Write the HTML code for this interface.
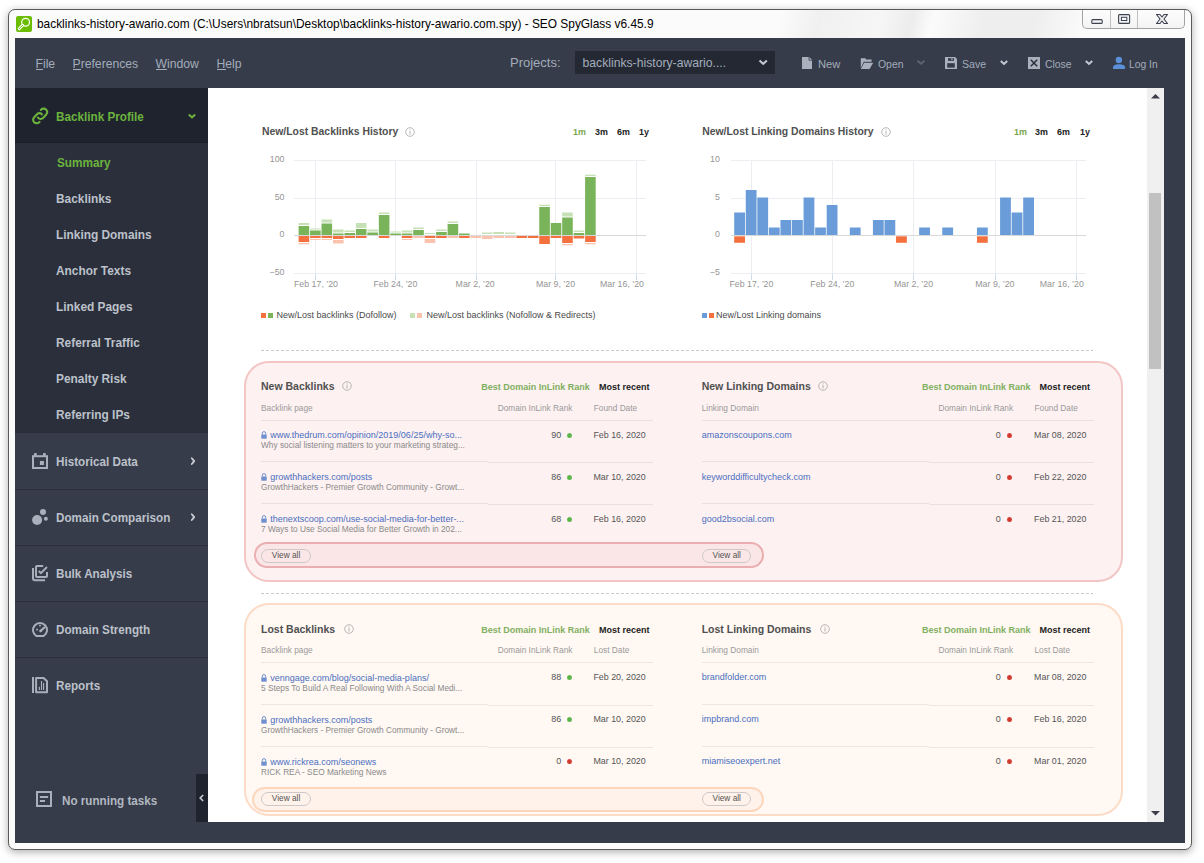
<!DOCTYPE html>
<html><head><meta charset="utf-8"><style>
html,body{margin:0;padding:0;width:1204px;height:863px;overflow:hidden;background:#fff;font-family:"Liberation Sans", sans-serif;}
.t{position:absolute;white-space:nowrap;line-height:1;font-family:"Liberation Sans", sans-serif;}
</style></head><body>
<div style="position:absolute;left:8px;top:9px;width:1184px;height:841px;border:1px solid #5a5a5a;border-radius:7px;background:#fbfbfb;box-shadow:0 2px 9px rgba(0,0,0,0.33);box-sizing:border-box"></div>
<div style="position:absolute;left:780px;top:10px;width:320px;height:28px;background:linear-gradient(105deg, rgba(0,0,0,0) 0px, rgba(0,0,0,0.045) 40px, rgba(0,0,0,0.02) 100px, rgba(0,0,0,0.06) 130px, rgba(0,0,0,0.0) 150px, rgba(0,0,0,0.05) 200px, rgba(0,0,0,0.05) 250px, rgba(0,0,0,0) 300px)"></div>
<div style="position:absolute;left:16px;top:16px;width:16px;height:16px;background:#6cbd00;border-radius:2px"></div>
<div class="t" style="left:37px;top:19px;font-size:11.9px;color:#000;font-weight:normal;">backlinks-history-awario.com (C:\Users\nbratsun\Desktop\backlinks-history-awario.com.spy) - SEO SpyGlass v6.45.9</div>
<div style="position:absolute;left:1082px;top:10px;width:103px;height:19px;border:1px solid #a7a2a2;border-top:none;border-radius:0 0 5px 5px;box-sizing:border-box;background:linear-gradient(#fdfdfd,#f3f3f3)"></div>
<div style="position:absolute;left:1110px;top:10px;width:1px;height:18px;background:#c4bfbf"></div>
<div style="position:absolute;left:1137px;top:10px;width:1px;height:18px;background:#c4bfbf"></div>
<div style="position:absolute;left:15px;top:38px;width:1170px;height:805px;background:#363c4a"></div>
<div class="t" style="left:35.5px;top:58px;font-size:12.2px;color:#a3adbb;font-weight:normal;">File</div>
<div style="position:absolute;left:36px;top:69px;width:7px;height:1px;background:#a3adbb"></div>
<div class="t" style="left:72.5px;top:58px;font-size:12.2px;color:#a3adbb;font-weight:normal;">Preferences</div>
<div style="position:absolute;left:73px;top:69px;width:8px;height:1px;background:#a3adbb"></div>
<div class="t" style="left:155.5px;top:58px;font-size:12.2px;color:#a3adbb;font-weight:normal;">Window</div>
<div style="position:absolute;left:156px;top:69px;width:11px;height:1px;background:#a3adbb"></div>
<div class="t" style="left:216.5px;top:58px;font-size:12.2px;color:#a3adbb;font-weight:normal;">Help</div>
<div style="position:absolute;left:217px;top:69px;width:9px;height:1px;background:#a3adbb"></div>
<div class="t" style="left:510px;top:56px;font-size:13px;color:#a3adbb;font-weight:normal;">Projects:</div>
<div style="position:absolute;left:575px;top:51px;width:200px;height:23px;background:#232833"></div>
<div class="t" style="left:582.5px;top:57px;font-size:12.2px;color:#a3adbb;font-weight:normal;">backlinks-history-awario....</div>
<div class="t" style="left:818px;top:59px;font-size:11.2px;color:#a3adbb;font-weight:normal;">New</div>
<div class="t" style="left:878px;top:59px;font-size:11.2px;color:#a3adbb;font-weight:normal;transform:scaleX(0.93);transform-origin:0 0;">Open</div>
<div class="t" style="left:962px;top:59px;font-size:11.2px;color:#a3adbb;font-weight:normal;transform:scaleX(0.95);transform-origin:0 0;">Save</div>
<div class="t" style="left:1045px;top:59px;font-size:11.2px;color:#a3adbb;font-weight:normal;transform:scaleX(0.93);transform-origin:0 0;">Close</div>
<div class="t" style="left:1129px;top:59px;font-size:11.2px;color:#a3adbb;font-weight:normal;transform:scaleX(0.92);transform-origin:0 0;">Log In</div>
<div style="position:absolute;left:15px;top:88px;width:193px;height:55px;background:#1f232d"></div>
<div style="position:absolute;left:15px;top:142px;width:193px;height:1px;background:#1b1e27"></div>
<div style="position:absolute;left:15px;top:143px;width:193px;height:290px;background:#2a2f3b"></div>
<div style="position:absolute;left:15px;top:433px;width:193px;height:389px;background:#363c49"></div>
<div class="t" style="left:56px;top:111px;font-size:12.5px;color:#6cb33e;font-weight:bold;transform:scaleX(0.937);transform-origin:0 0;">Backlink Profile</div>
<div class="t" style="left:57px;top:157px;font-size:12.5px;color:#6cb33e;font-weight:bold;transform:scaleX(0.94);transform-origin:0 0;">Summary</div>
<div class="t" style="left:56px;top:193px;font-size:12.5px;color:#bcc1ca;font-weight:bold;transform:scaleX(0.95);transform-origin:0 0;">Backlinks</div>
<div class="t" style="left:56px;top:229px;font-size:12.5px;color:#bcc1ca;font-weight:bold;transform:scaleX(0.95);transform-origin:0 0;">Linking Domains</div>
<div class="t" style="left:56px;top:265px;font-size:12.5px;color:#bcc1ca;font-weight:bold;transform:scaleX(0.95);transform-origin:0 0;">Anchor Texts</div>
<div class="t" style="left:56px;top:301px;font-size:12.5px;color:#bcc1ca;font-weight:bold;transform:scaleX(0.95);transform-origin:0 0;">Linked Pages</div>
<div class="t" style="left:56px;top:337px;font-size:12.5px;color:#bcc1ca;font-weight:bold;transform:scaleX(0.95);transform-origin:0 0;">Referral Traffic</div>
<div class="t" style="left:56px;top:373px;font-size:12.5px;color:#bcc1ca;font-weight:bold;transform:scaleX(0.95);transform-origin:0 0;">Penalty Risk</div>
<div class="t" style="left:56px;top:409px;font-size:12.5px;color:#bcc1ca;font-weight:bold;transform:scaleX(0.95);transform-origin:0 0;">Referring IPs</div>
<div class="t" style="left:56px;top:456px;font-size:12.5px;color:#bcc1ca;font-weight:bold;transform:scaleX(0.935);transform-origin:0 0;">Historical Data</div>
<div class="t" style="left:56px;top:512px;font-size:12.5px;color:#bcc1ca;font-weight:bold;transform:scaleX(0.935);transform-origin:0 0;">Domain Comparison</div>
<div class="t" style="left:56px;top:568px;font-size:12.5px;color:#bcc1ca;font-weight:bold;transform:scaleX(0.935);transform-origin:0 0;">Bulk Analysis</div>
<div class="t" style="left:56px;top:624px;font-size:12.5px;color:#bcc1ca;font-weight:bold;transform:scaleX(0.935);transform-origin:0 0;">Domain Strength</div>
<div class="t" style="left:56px;top:680px;font-size:12.5px;color:#bcc1ca;font-weight:bold;transform:scaleX(0.935);transform-origin:0 0;">Reports</div>
<div style="position:absolute;left:15px;top:489px;width:193px;height:1px;background:#2b303b"></div>
<div style="position:absolute;left:15px;top:545px;width:193px;height:1px;background:#2b303b"></div>
<div style="position:absolute;left:15px;top:601px;width:193px;height:1px;background:#2b303b"></div>
<div style="position:absolute;left:15px;top:657px;width:193px;height:1px;background:#2b303b"></div>
<div class="t" style="left:62px;top:795px;font-size:12.5px;color:#b2b8c1;font-weight:bold;transform:scaleX(0.933);transform-origin:0 0;">No running tasks</div>
<div style="position:absolute;left:196px;top:774px;width:12px;height:48px;background:#1f232d"></div>
<div style="position:absolute;left:208px;top:88px;width:956px;height:734px;background:#fff"></div>
<div style="position:absolute;left:1147px;top:88px;width:17px;height:734px;background:#f0f0f0"></div>
<div style="position:absolute;left:1149px;top:193px;width:12px;height:176px;background:#c1c1c1"></div>
<svg style="position:absolute;left:0;top:0;z-index:5" width="1204" height="863" viewBox="0 0 1204 863">
<path d="M1151 98.5 L1155.5 94 L1160 98.5 Z" fill="#3e3e4a"/>
<path d="M1151 811 L1155.5 815.5 L1160 811 Z" fill="#3e3e4a"/>
<circle cx="25.6" cy="22.3" r="3.9" fill="none" stroke="#fff" stroke-width="1.2"/>
<path d="M22.6 25.3 L19.2 28.7" stroke="#fff" stroke-width="3" stroke-linecap="round"/>
<path d="M22.6 25.3 L19.2 28.7" stroke="#6cbd00" stroke-width="1" stroke-linecap="round"/>
<rect x="1091.8" y="19.6" width="10.4" height="3.8" rx="1" fill="#f4f4f4" stroke="#3d4150" stroke-width="1.1"/>
<rect x="1118.6" y="14.6" width="11" height="8.8" rx="1" fill="#f4f4f4" stroke="#3d4150" stroke-width="1.1"/>
<rect x="1121.4" y="17.3" width="5.4" height="3.2" fill="#fff" stroke="#3d4150" stroke-width="1"/>
<path d="M1156.5 14.5 L1160 14.5 L1162 17 L1164 14.5 L1167.5 14.5 L1164 19 L1167.5 23.5 L1164 23.5 L1162 21 L1160 23.5 L1156.5 23.5 L1160 19 Z" fill="#eee" stroke="#3d4150" stroke-width="1.1" stroke-linejoin="round"/>
<path d="M759.5 60.5 L763.2 63.8 L766.9 60.5" fill="none" stroke="#c3c9d2" stroke-width="2"/>
<path d="M802 57 H809.2 L812 59.8 V69 H802 Z" fill="#a9b1bd"/>
<path d="M809 56.5 V60.2 H812.5" fill="none" stroke="#363c4a" stroke-width="0.8"/>
<path d="M860.8 58.3 H865.2 L866.2 59.5 H871.6 V61.8 H863.8 L860.8 68 Z" fill="#a9b1bd"/>
<path d="M864.2 62.8 H873.2 L869.6 69 H860.8 Z" fill="#a9b1bd"/>
<path d="M917.5 60.8 L921 63.8 L924.5 60.8" fill="none" stroke="#5d6574" stroke-width="1.8"/>
<path d="M945 57 H955 L957 59 V69 H945 Z" fill="#a9b1bd"/>
<rect x="948" y="58.2" width="6" height="2.6" fill="#363c4a"/>
<rect x="951.3" y="58.2" width="1.2" height="1.8" fill="#a9b1bd"/>
<rect x="947.2" y="63.2" width="7.6" height="4.4" fill="#363c4a"/>
<path d="M1000.8 61 L1004 64 L1007.2 61" fill="none" stroke="#c3c9d2" stroke-width="2"/>
<rect x="1028" y="57" width="12" height="12" fill="#a9b1bd"/>
<path d="M1030.8 59.8 L1037.2 66.2 M1037.2 59.8 L1030.8 66.2" stroke="#2b303b" stroke-width="1.5"/>
<path d="M1085.8 61 L1089 64 L1092.2 61" fill="none" stroke="#c3c9d2" stroke-width="2"/>
<circle cx="1118.9" cy="60" r="3.2" fill="#5b8fd8"/>
<path d="M1113 69 V67.5 C1113 65.2 1115.5 64.2 1119 64.2 C1122.5 64.2 1125.1 65.2 1125.1 67.5 V69 Z" fill="#5b8fd8"/>

<g fill="none" stroke="#6cb33e" stroke-width="2.1" stroke-linecap="round">
<path d="M40.8 110 C42 108.5 44.5 108 46 109.5 C47.8 111.2 47.2 113.5 45.8 115 L43.3 117.8 C41.8 119.4 39.5 119.3 37.9 117.6"/>
<path d="M41.9 114.4 C40.8 113 38.8 112.6 37.2 114 L34.4 116.9 C32.6 118.7 32.8 121 34.3 122.4 C35.9 123.8 38.2 123.4 39.6 121.9"/>
</g>
<path d="M188.8 114.5 L192 117.3 L195.2 114.5" fill="none" stroke="#6cb33e" stroke-width="2"/>

<g fill="none" stroke="#a9b0bb" stroke-width="2">
<rect x="33" y="456.2" width="14" height="11.8"/>
<path d="M35.4 453 V456 M44.4 453 V456" stroke-width="2.6"/>
</g>
<rect x="39.9" y="461" width="4" height="4" fill="#a9b0bb"/>
<circle cx="37.1" cy="520" r="5" fill="#a9b0bb"/>
<circle cx="43" cy="511.9" r="3" fill="#a9b0bb"/>
<circle cx="45.9" cy="518.8" r="2" fill="#a9b0bb"/>

<g fill="none" stroke="#a9b0bb" stroke-width="2">
<path d="M33 568 V578.2 Q33 580.2 35 580.2 H45"/>
<path d="M43.2 566 H37 Q36 566 36 567 V576 Q36 577 37 577 H46 Q47 577 47 576 V572"/>
<path d="M38.8 571 L40.9 573.1 L47 567"/>
</g>
<g fill="none" stroke="#a9b0bb" stroke-width="2">
<path d="M36.3 636 A7 7 0 1 1 43.7 636 Z"/>
</g>
<rect x="39.1" y="624.8" width="1.8" height="1.6" fill="#a9b0bb"/>
<rect x="36.2" y="628.8" width="1.8" height="1.6" fill="#a9b0bb"/>
<path d="M40.5 631 L44.2 627.6" stroke="#a9b0bb" stroke-width="2.2" stroke-linecap="round"/>
<circle cx="40.7" cy="630.9" r="1.3" fill="#a9b0bb"/>

<path d="M33 677 V693" stroke="#a9b0bb" stroke-width="2"/>
<path d="M36.1 678 H43.6 L47 681.3 V692.2 H36.1 Z" fill="none" stroke="#a9b0bb" stroke-width="2" stroke-linejoin="round"/>
<path d="M39.4 686.8 V690 M41.5 681 V690 M43.6 682.9 V690" stroke="#a9b0bb" stroke-width="1.15"/>

<path d="M191.8 458.2 L194.2 461.1 L191.8 464" fill="none" stroke="#ccd0d6" stroke-width="1.8" stroke-linecap="round" stroke-linejoin="round"/>
<path d="M191.8 514.2 L194.2 517.1 L191.8 520" fill="none" stroke="#ccd0d6" stroke-width="1.8" stroke-linecap="round" stroke-linejoin="round"/>
<rect x="37" y="792" width="14" height="14" fill="none" stroke="#a9b0bb" stroke-width="2"/>
<path d="M39.9 797 H48.1 M39.9 801 H45" stroke="#a9b0bb" stroke-width="2"/>
<path d="M203.2 795 L200.2 798 L203.2 801" fill="none" stroke="#c8ccd3" stroke-width="1.6"/>
</svg>
<svg style="position:absolute;left:0;top:0" width="1204" height="863" viewBox="0 0 1204 863"><rect x="294" y="160" width="352" height="1" fill="#eceef2"/><rect x="294" y="198" width="352" height="1" fill="#eceef2"/><rect x="294" y="273" width="352" height="1" fill="#eceef2"/><rect x="315.0" y="160" width="1" height="114" fill="#eceef2"/><rect x="315.0" y="274" width="1" height="6" fill="#cfdcee"/><rect x="395.0" y="160" width="1" height="114" fill="#eceef2"/><rect x="395.0" y="274" width="1" height="6" fill="#cfdcee"/><rect x="476.0" y="160" width="1" height="114" fill="#eceef2"/><rect x="476.0" y="274" width="1" height="6" fill="#cfdcee"/><rect x="555.0" y="160" width="1" height="114" fill="#eceef2"/><rect x="555.0" y="274" width="1" height="6" fill="#cfdcee"/><rect x="636.0" y="160" width="1" height="114" fill="#eceef2"/><rect x="636.0" y="274" width="1" height="6" fill="#cfdcee"/><rect x="294" y="235" width="352" height="1" fill="#d9d9d9"/><rect x="298.60" y="226.00" width="10.6" height="9" fill="#79b35a"/><rect x="298.60" y="223.00" width="10.6" height="2" fill="#c6e1b5"/><rect x="298.60" y="236" width="10.6" height="6" fill="#f4703f"/><rect x="298.60" y="243.00" width="10.6" height="1.3" fill="#fbc3ae"/><rect x="310.06" y="230.50" width="10.6" height="4.5" fill="#79b35a"/><rect x="310.06" y="228.50" width="10.6" height="1" fill="#c6e1b5"/><rect x="310.06" y="236" width="10.6" height="2" fill="#f4703f"/><rect x="310.06" y="239.00" width="10.6" height="1" fill="#fbc3ae"/><rect x="321.52" y="223.50" width="10.6" height="11.5" fill="#79b35a"/><rect x="321.52" y="219.50" width="10.6" height="3" fill="#c6e1b5"/><rect x="321.52" y="236" width="10.6" height="2" fill="#f4703f"/><rect x="321.52" y="239.00" width="10.6" height="1" fill="#fbc3ae"/><rect x="332.98" y="233.50" width="10.6" height="1.5" fill="#79b35a"/><rect x="332.98" y="229.50" width="10.6" height="3" fill="#c6e1b5"/><rect x="332.98" y="236" width="10.6" height="3" fill="#f4703f"/><rect x="332.98" y="240.00" width="10.6" height="3.5" fill="#fbc3ae"/><rect x="344.44" y="233.00" width="10.6" height="2" fill="#79b35a"/><rect x="344.44" y="230.50" width="10.6" height="1.5" fill="#c6e1b5"/><rect x="344.44" y="236" width="10.6" height="2" fill="#f4703f"/><rect x="355.90" y="229.00" width="10.6" height="6" fill="#79b35a"/><rect x="355.90" y="223.00" width="10.6" height="5" fill="#c6e1b5"/><rect x="355.90" y="236" width="10.6" height="2" fill="#f4703f"/><rect x="367.36" y="232.50" width="10.6" height="2.5" fill="#79b35a"/><rect x="367.36" y="229.50" width="10.6" height="2" fill="#c6e1b5"/><rect x="378.82" y="215.00" width="10.6" height="20" fill="#79b35a"/><rect x="378.82" y="212.50" width="10.6" height="1.5" fill="#c6e1b5"/><rect x="378.82" y="236" width="10.6" height="2" fill="#f4703f"/><rect x="390.28" y="233.50" width="10.6" height="1.5" fill="#79b35a"/><rect x="390.28" y="231.50" width="10.6" height="1" fill="#c6e1b5"/><rect x="401.74" y="233.50" width="10.6" height="1.5" fill="#79b35a"/><rect x="401.74" y="230.50" width="10.6" height="2" fill="#c6e1b5"/><rect x="401.74" y="236" width="10.6" height="2" fill="#f4703f"/><rect x="401.74" y="239.00" width="10.6" height="1" fill="#fbc3ae"/><rect x="413.20" y="230.00" width="10.6" height="5" fill="#79b35a"/><rect x="413.20" y="227.50" width="10.6" height="1.5" fill="#c6e1b5"/><rect x="413.20" y="236.00" width="10.6" height="2" fill="#fbc3ae"/><rect x="424.66" y="233.00" width="10.6" height="1" fill="#c6e1b5"/><rect x="424.66" y="236" width="10.6" height="2" fill="#f4703f"/><rect x="424.66" y="239.00" width="10.6" height="4" fill="#fbc3ae"/><rect x="436.12" y="232.00" width="10.6" height="3" fill="#79b35a"/><rect x="436.12" y="229.50" width="10.6" height="1.5" fill="#c6e1b5"/><rect x="436.12" y="236" width="10.6" height="2" fill="#f4703f"/><rect x="447.58" y="224.00" width="10.6" height="11" fill="#79b35a"/><rect x="447.58" y="221.50" width="10.6" height="1.5" fill="#c6e1b5"/><rect x="447.58" y="236.00" width="10.6" height="2" fill="#fbc3ae"/><rect x="459.04" y="233.50" width="10.6" height="1.5" fill="#79b35a"/><rect x="459.04" y="236" width="10.6" height="2" fill="#f4703f"/><rect x="470.50" y="236.00" width="10.6" height="2" fill="#fbc3ae"/><rect x="481.96" y="232.50" width="10.6" height="1.5" fill="#c6e1b5"/><rect x="481.96" y="236.00" width="10.6" height="3" fill="#fbc3ae"/><rect x="493.42" y="232.00" width="10.6" height="2" fill="#c6e1b5"/><rect x="493.42" y="236.00" width="10.6" height="2" fill="#fbc3ae"/><rect x="504.88" y="232.50" width="10.6" height="1.5" fill="#c6e1b5"/><rect x="504.88" y="236.00" width="10.6" height="2" fill="#fbc3ae"/><rect x="516.34" y="236" width="10.6" height="2" fill="#f4703f"/><rect x="527.80" y="236" width="10.6" height="2" fill="#f4703f"/><rect x="539.26" y="207.00" width="10.6" height="28" fill="#79b35a"/><rect x="539.26" y="204.70" width="10.6" height="1.3" fill="#c6e1b5"/><rect x="539.26" y="236" width="10.6" height="8" fill="#f4703f"/><rect x="550.72" y="223.00" width="10.6" height="12" fill="#79b35a"/><rect x="550.72" y="236" width="10.6" height="2" fill="#f4703f"/><rect x="562.18" y="217.50" width="10.6" height="17.5" fill="#79b35a"/><rect x="562.18" y="212.50" width="10.6" height="4" fill="#c6e1b5"/><rect x="562.18" y="236" width="10.6" height="7" fill="#f4703f"/><rect x="562.18" y="244.00" width="10.6" height="1.3" fill="#fbc3ae"/><rect x="573.64" y="233.00" width="10.6" height="2" fill="#79b35a"/><rect x="573.64" y="230.50" width="10.6" height="1.5" fill="#c6e1b5"/><rect x="573.64" y="236" width="10.6" height="2.5" fill="#f4703f"/><rect x="585.10" y="177.00" width="10.6" height="58" fill="#79b35a"/><rect x="585.10" y="174.70" width="10.6" height="1.3" fill="#c6e1b5"/><rect x="585.10" y="236" width="10.6" height="6" fill="#f4703f"/><rect x="585.10" y="243.00" width="10.6" height="1.3" fill="#fbc3ae"/></svg>
<svg style="position:absolute;left:0;top:0" width="1204" height="863" viewBox="0 0 1204 863"><rect x="731" y="160" width="355" height="1" fill="#eceef2"/><rect x="731" y="198" width="355" height="1" fill="#eceef2"/><rect x="731" y="273" width="355" height="1" fill="#eceef2"/><rect x="751.0" y="160" width="1" height="114" fill="#eceef2"/><rect x="751.0" y="274" width="1" height="6" fill="#cfdcee"/><rect x="832.0" y="160" width="1" height="114" fill="#eceef2"/><rect x="832.0" y="274" width="1" height="6" fill="#cfdcee"/><rect x="913.0" y="160" width="1" height="114" fill="#eceef2"/><rect x="913.0" y="274" width="1" height="6" fill="#cfdcee"/><rect x="995.0" y="160" width="1" height="114" fill="#eceef2"/><rect x="995.0" y="274" width="1" height="6" fill="#cfdcee"/><rect x="1076.0" y="160" width="1" height="114" fill="#eceef2"/><rect x="1076.0" y="274" width="1" height="6" fill="#cfdcee"/><rect x="731" y="235" width="355" height="1" fill="#d9d9d9"/><rect x="734.20" y="212.50" width="10.8" height="22.5" fill="#6a9cd9"/><rect x="734.20" y="236.3" width="10.8" height="6.5" fill="#f4703f"/><rect x="745.76" y="190.00" width="10.8" height="45.0" fill="#6a9cd9"/><rect x="757.32" y="197.50" width="10.8" height="37.5" fill="#6a9cd9"/><rect x="768.88" y="227.50" width="10.8" height="7.5" fill="#6a9cd9"/><rect x="780.44" y="220.00" width="10.8" height="15.0" fill="#6a9cd9"/><rect x="792.00" y="220.00" width="10.8" height="15.0" fill="#6a9cd9"/><rect x="803.56" y="197.50" width="10.8" height="37.5" fill="#6a9cd9"/><rect x="815.12" y="227.50" width="10.8" height="7.5" fill="#6a9cd9"/><rect x="826.68" y="205.00" width="10.8" height="30.0" fill="#6a9cd9"/><rect x="849.80" y="227.50" width="10.8" height="7.5" fill="#6a9cd9"/><rect x="872.92" y="220.00" width="10.8" height="15.0" fill="#6a9cd9"/><rect x="884.48" y="220.00" width="10.8" height="15.0" fill="#6a9cd9"/><rect x="896.04" y="236.3" width="10.8" height="6.5" fill="#f4703f"/><rect x="919.16" y="227.50" width="10.8" height="7.5" fill="#6a9cd9"/><rect x="942.28" y="227.50" width="10.8" height="7.5" fill="#6a9cd9"/><rect x="976.96" y="227.50" width="10.8" height="7.5" fill="#6a9cd9"/><rect x="976.96" y="236.3" width="10.8" height="6.5" fill="#f4703f"/><rect x="1000.08" y="197.50" width="10.8" height="37.5" fill="#6a9cd9"/><rect x="1011.64" y="212.50" width="10.8" height="22.5" fill="#6a9cd9"/><rect x="1023.20" y="197.50" width="10.8" height="37.5" fill="#6a9cd9"/></svg>
<div class="t" style="right:919.5px;top:155px;font-size:8.8px;color:#959595;font-weight:normal;">100</div>
<div class="t" style="right:919.5px;top:193px;font-size:8.8px;color:#959595;font-weight:normal;">50</div>
<div class="t" style="right:919.5px;top:230px;font-size:8.8px;color:#959595;font-weight:normal;">0</div>
<div class="t" style="right:919.5px;top:268px;font-size:8.8px;color:#959595;font-weight:normal;">−50</div>
<div class="t" style="right:484.20000000000005px;top:155px;font-size:8.8px;color:#959595;font-weight:normal;">10</div>
<div class="t" style="right:484.20000000000005px;top:193px;font-size:8.8px;color:#959595;font-weight:normal;">5</div>
<div class="t" style="right:484.20000000000005px;top:230px;font-size:8.8px;color:#959595;font-weight:normal;">0</div>
<div class="t" style="right:484.20000000000005px;top:268px;font-size:8.8px;color:#959595;font-weight:normal;">−5</div>
<div class="t" style="left:294px;top:280px;font-size:8.8px;color:#959595;font-weight:normal;">Feb 17, ’20</div>
<div class="t" style="left:373.4px;top:280px;font-size:8.8px;color:#959595;font-weight:normal;">Feb 24, ’20</div>
<div class="t" style="left:455.6px;top:280px;font-size:8.8px;color:#959595;font-weight:normal;">Mar 2, ’20</div>
<div class="t" style="left:536px;top:280px;font-size:8.8px;color:#959595;font-weight:normal;">Mar 9, ’20</div>
<div class="t" style="left:600px;top:280px;font-size:8.8px;color:#959595;font-weight:normal;">Mar 16, ’20</div>
<div class="t" style="left:729.4px;top:280px;font-size:8.8px;color:#959595;font-weight:normal;">Feb 17, ’20</div>
<div class="t" style="left:810.3px;top:280px;font-size:8.8px;color:#959595;font-weight:normal;">Feb 24, ’20</div>
<div class="t" style="left:894px;top:280px;font-size:8.8px;color:#959595;font-weight:normal;">Mar 2, ’20</div>
<div class="t" style="left:975.3px;top:280px;font-size:8.8px;color:#959595;font-weight:normal;">Mar 9, ’20</div>
<div class="t" style="left:1039.8px;top:280px;font-size:8.8px;color:#959595;font-weight:normal;">Mar 16, ’20</div>
<div class="t" style="left:262px;top:127px;font-size:10.4px;color:#505050;font-weight:bold;">New/Lost Backlinks History</div>
<svg style="position:absolute;left:405px;top:127px" width="10" height="10" viewBox="0 0 10 10"><circle cx="5" cy="5" r="4.3" fill="none" stroke="#b0b0b0" stroke-width="0.9"/><rect x="4.5" y="4.2" width="1" height="3.3" fill="#b0b0b0"/><rect x="4.5" y="2.4" width="1" height="1" fill="#b0b0b0"/></svg>
<div class="t" style="left:702.2px;top:127px;font-size:10.4px;color:#505050;font-weight:bold;">New/Lost Linking Domains History</div>
<svg style="position:absolute;left:881px;top:127px" width="10" height="10" viewBox="0 0 10 10"><circle cx="5" cy="5" r="4.3" fill="none" stroke="#b0b0b0" stroke-width="0.9"/><rect x="4.5" y="4.2" width="1" height="3.3" fill="#b0b0b0"/><rect x="4.5" y="2.4" width="1" height="1" fill="#b0b0b0"/></svg>
<div class="t" style="left:572.6px;top:127px;font-size:9.6px;color:#7aa84e;font-weight:bold;transform:scaleX(0.93);transform-origin:0 0;">1m</div>
<div class="t" style="left:595px;top:127px;font-size:9.6px;color:#222;font-weight:bold;transform:scaleX(0.93);transform-origin:0 0;">3m</div>
<div class="t" style="left:617.2px;top:127px;font-size:9.6px;color:#222;font-weight:bold;transform:scaleX(0.93);transform-origin:0 0;">6m</div>
<div class="t" style="left:639px;top:127px;font-size:9.6px;color:#222;font-weight:bold;transform:scaleX(0.93);transform-origin:0 0;">1y</div>
<div class="t" style="left:1013.7px;top:127px;font-size:9.6px;color:#7aa84e;font-weight:bold;transform:scaleX(0.93);transform-origin:0 0;">1m</div>
<div class="t" style="left:1035.3px;top:127px;font-size:9.6px;color:#222;font-weight:bold;transform:scaleX(0.93);transform-origin:0 0;">3m</div>
<div class="t" style="left:1057.3px;top:127px;font-size:9.6px;color:#222;font-weight:bold;transform:scaleX(0.93);transform-origin:0 0;">6m</div>
<div class="t" style="left:1080px;top:127px;font-size:9.6px;color:#222;font-weight:bold;transform:scaleX(0.93);transform-origin:0 0;">1y</div>
<div style="position:absolute;left:261px;top:312.5px;width:5px;height:5px;background:#f4703f"></div>
<div style="position:absolute;left:267.5px;top:312.5px;width:5px;height:5px;background:#79b35a"></div>
<div class="t" style="left:276.5px;top:311px;font-size:9px;color:#4a4a4a;font-weight:normal;">New/Lost backlinks (Dofollow)</div>
<div style="position:absolute;left:410px;top:312.5px;width:5px;height:5px;background:#c6e1b5"></div>
<div style="position:absolute;left:416.5px;top:312.5px;width:5px;height:5px;background:#fbc3ae"></div>
<div class="t" style="left:426.4px;top:311px;font-size:9px;color:#4a4a4a;font-weight:normal;">New/Lost backlinks (Nofollow &amp; Redirects)</div>
<div style="position:absolute;left:702px;top:312.5px;width:5px;height:5px;background:#6a9cd9"></div>
<div style="position:absolute;left:708.5px;top:312.5px;width:5px;height:5px;background:#f4703f"></div>
<div class="t" style="left:716px;top:311px;font-size:9px;color:#4a4a4a;font-weight:normal;">New/Lost Linking domains</div>
<div style="position:absolute;left:261px;top:350px;width:832px;height:1px;background:repeating-linear-gradient(90deg,#c9c9c9 0 3px,transparent 3px 5px)"></div>
<div style="position:absolute;left:261px;top:593px;width:832px;height:1px;background:repeating-linear-gradient(90deg,#c9c9c9 0 3px,transparent 3px 5px)"></div>
<div style="position:absolute;left:244px;top:361px;width:879px;height:221px;border:2px solid #f3c6c6;background:#fdf1f1;border-radius:25px;box-sizing:border-box"></div>
<div style="position:absolute;left:244px;top:603px;width:879px;height:213px;border:2px solid #fcdcc6;background:#fff8f3;border-radius:25px;box-sizing:border-box"></div>
<div class="t" style="left:261px;top:381px;font-size:10.5px;color:#505050;font-weight:bold;">New Backlinks</div>
<svg style="position:absolute;left:341.5px;top:381.4px" width="10" height="10" viewBox="0 0 10 10"><circle cx="5" cy="5" r="4.3" fill="none" stroke="#b0b0b0" stroke-width="0.9"/><rect x="4.5" y="4.2" width="1" height="3.3" fill="#b0b0b0"/><rect x="4.5" y="2.4" width="1" height="1" fill="#b0b0b0"/></svg>
<div class="t" style="left:481.2px;top:383px;font-size:9.0px;color:#7fb060;font-weight:bold;">Best Domain InLink Rank</div>
<div class="t" style="left:598.9px;top:383px;font-size:9px;color:#222;font-weight:bold;">Most recent</div>
<div class="t" style="left:261px;top:404px;font-size:8.3px;color:#9a9a9a;font-weight:normal;">Backlink page</div>
<div class="t" style="left:497.7px;top:404px;font-size:8.3px;color:#9a9a9a;font-weight:normal;">Domain InLink Rank</div>
<div class="t" style="left:593.8px;top:404px;font-size:8.3px;color:#9a9a9a;font-weight:normal;">Found Date</div>
<div style="position:absolute;left:261px;top:420px;width:392px;height:1px;background:#ecdfdf"></div>
<div style="position:absolute;left:261px;top:461px;width:227px;height:1px;background:#ecdfdf"></div>
<div style="position:absolute;left:488px;top:462px;width:165px;height:1px;background:#ecdfdf"></div>
<div style="position:absolute;left:261px;top:503px;width:227px;height:1px;background:#ecdfdf"></div>
<div style="position:absolute;left:488px;top:504px;width:165px;height:1px;background:#ecdfdf"></div>
<svg style="position:absolute;left:261px;top:430.5px" width="6" height="8" viewBox="0 0 6 8"><path d="M1.3 3.5 V2.3 A1.7 1.7 0 0 1 4.7 2.3 V3.5" fill="none" stroke="#6f8fce" stroke-width="1"/><rect x="0.3" y="3.5" width="5.4" height="4.2" fill="#6f8fce"/></svg>
<div class="t" style="left:270.3px;top:431px;font-size:9px;color:#4a6fc0;font-weight:normal;">www.thedrum.com/opinion/2019/06/25/why-so...</div>
<div class="t" style="left:261px;top:441px;font-size:8.3px;color:#8a8a8a;font-weight:normal;">Why social listening matters to your marketing strateg...</div>
<div class="t" style="right:642.7px;top:431px;font-size:9px;color:#555;font-weight:normal;">90</div>
<div style="position:absolute;left:567.0px;top:433.0px;width:4.8px;height:5px;border-radius:50%;background:#5cb54a"></div>
<div class="t" style="left:593.4px;top:431px;font-size:8.9px;color:#555;font-weight:normal;">Feb 16, 2020</div>
<svg style="position:absolute;left:261px;top:472.5px" width="6" height="8" viewBox="0 0 6 8"><path d="M1.3 3.5 V2.3 A1.7 1.7 0 0 1 4.7 2.3 V3.5" fill="none" stroke="#6f8fce" stroke-width="1"/><rect x="0.3" y="3.5" width="5.4" height="4.2" fill="#6f8fce"/></svg>
<div class="t" style="left:270.3px;top:473px;font-size:9px;color:#4a6fc0;font-weight:normal;">growthhackers.com/posts</div>
<div class="t" style="left:261px;top:483px;font-size:8.3px;color:#8a8a8a;font-weight:normal;">GrowthHackers - Premier Growth Community - Growt...</div>
<div class="t" style="right:642.7px;top:473px;font-size:9px;color:#555;font-weight:normal;">86</div>
<div style="position:absolute;left:567.0px;top:475.0px;width:4.8px;height:5px;border-radius:50%;background:#5cb54a"></div>
<div class="t" style="left:593.4px;top:473px;font-size:8.9px;color:#555;font-weight:normal;">Mar 10, 2020</div>
<svg style="position:absolute;left:261px;top:514.5px" width="6" height="8" viewBox="0 0 6 8"><path d="M1.3 3.5 V2.3 A1.7 1.7 0 0 1 4.7 2.3 V3.5" fill="none" stroke="#6f8fce" stroke-width="1"/><rect x="0.3" y="3.5" width="5.4" height="4.2" fill="#6f8fce"/></svg>
<div class="t" style="left:270.3px;top:515px;font-size:9px;color:#4a6fc0;font-weight:normal;">thenextscoop.com/use-social-media-for-better-...</div>
<div class="t" style="left:261px;top:525px;font-size:8.3px;color:#8a8a8a;font-weight:normal;">7 Ways to Use Social Media for Better Growth in 202...</div>
<div class="t" style="right:642.7px;top:515px;font-size:9px;color:#555;font-weight:normal;">68</div>
<div style="position:absolute;left:567.0px;top:517.0px;width:4.8px;height:5px;border-radius:50%;background:#5cb54a"></div>
<div class="t" style="left:593.4px;top:515px;font-size:8.9px;color:#555;font-weight:normal;">Feb 16, 2020</div>
<div class="t" style="left:701.7px;top:381px;font-size:10.5px;color:#505050;font-weight:bold;">New Linking Domains</div>
<svg style="position:absolute;left:817.8px;top:381.4px" width="10" height="10" viewBox="0 0 10 10"><circle cx="5" cy="5" r="4.3" fill="none" stroke="#b0b0b0" stroke-width="0.9"/><rect x="4.5" y="4.2" width="1" height="3.3" fill="#b0b0b0"/><rect x="4.5" y="2.4" width="1" height="1" fill="#b0b0b0"/></svg>
<div class="t" style="left:921.9px;top:383px;font-size:9.0px;color:#7fb060;font-weight:bold;">Best Domain InLink Rank</div>
<div class="t" style="left:1039.6px;top:383px;font-size:9px;color:#222;font-weight:bold;">Most recent</div>
<div class="t" style="left:701.7px;top:404px;font-size:8.3px;color:#9a9a9a;font-weight:normal;">Linking Domain</div>
<div class="t" style="left:938.4px;top:404px;font-size:8.3px;color:#9a9a9a;font-weight:normal;">Domain InLink Rank</div>
<div class="t" style="left:1034.5px;top:404px;font-size:8.3px;color:#9a9a9a;font-weight:normal;">Found Date</div>
<div style="position:absolute;left:701.7px;top:420px;width:392px;height:1px;background:#ecdfdf"></div>
<div style="position:absolute;left:701.7px;top:461px;width:227px;height:1px;background:#ecdfdf"></div>
<div style="position:absolute;left:928.7px;top:462px;width:165px;height:1px;background:#ecdfdf"></div>
<div style="position:absolute;left:701.7px;top:503px;width:227px;height:1px;background:#ecdfdf"></div>
<div style="position:absolute;left:928.7px;top:504px;width:165px;height:1px;background:#ecdfdf"></div>
<div class="t" style="left:701.7px;top:431px;font-size:9px;color:#4a6fc0;font-weight:normal;">amazonscoupons.com</div>
<div class="t" style="right:203.20000000000005px;top:431px;font-size:9px;color:#555;font-weight:normal;">0</div>
<div style="position:absolute;left:1007.1px;top:433.0px;width:4.8px;height:5px;border-radius:50%;background:#d23a2f"></div>
<div class="t" style="left:1034.1px;top:431px;font-size:8.9px;color:#555;font-weight:normal;">Mar 08, 2020</div>
<div class="t" style="left:701.7px;top:473px;font-size:9px;color:#4a6fc0;font-weight:normal;">keyworddifficultycheck.com</div>
<div class="t" style="right:203.20000000000005px;top:473px;font-size:9px;color:#555;font-weight:normal;">0</div>
<div style="position:absolute;left:1007.1px;top:475.0px;width:4.8px;height:5px;border-radius:50%;background:#d23a2f"></div>
<div class="t" style="left:1034.1px;top:473px;font-size:8.9px;color:#555;font-weight:normal;">Feb 22, 2020</div>
<div class="t" style="left:701.7px;top:515px;font-size:9px;color:#4a6fc0;font-weight:normal;">good2bsocial.com</div>
<div class="t" style="right:203.20000000000005px;top:515px;font-size:9px;color:#555;font-weight:normal;">0</div>
<div style="position:absolute;left:1007.1px;top:517.0px;width:4.8px;height:5px;border-radius:50%;background:#d23a2f"></div>
<div class="t" style="left:1034.1px;top:515px;font-size:8.9px;color:#555;font-weight:normal;">Feb 21, 2020</div>
<div style="position:absolute;left:253.5px;top:542.4px;width:510.5px;height:25.800000000000068px;border:2px solid #eaaeb0;background:#fae6e6;border-radius:13px;box-sizing:border-box"></div>
<div style="position:absolute;left:261px;top:549px;width:49.8px;height:13.7px;border:1px solid #cfc8c8;border-radius:7px;box-sizing:border-box;background:transparent"></div>
<div class="t" style="left:271.8px;top:551px;font-size:8.3px;color:#555;font-weight:normal;">View all</div>
<div style="position:absolute;left:701.7px;top:549px;width:49.8px;height:13.7px;border:1px solid #cfc8c8;border-radius:7px;box-sizing:border-box;background:transparent"></div>
<div class="t" style="left:712.5px;top:551px;font-size:8.3px;color:#555;font-weight:normal;">View all</div>
<div class="t" style="left:261px;top:624px;font-size:10.5px;color:#505050;font-weight:bold;">Lost Backlinks</div>
<svg style="position:absolute;left:343.8px;top:624.4px" width="10" height="10" viewBox="0 0 10 10"><circle cx="5" cy="5" r="4.3" fill="none" stroke="#b0b0b0" stroke-width="0.9"/><rect x="4.5" y="4.2" width="1" height="3.3" fill="#b0b0b0"/><rect x="4.5" y="2.4" width="1" height="1" fill="#b0b0b0"/></svg>
<div class="t" style="left:481.2px;top:626px;font-size:9.0px;color:#7fb060;font-weight:bold;">Best Domain InLink Rank</div>
<div class="t" style="left:598.9px;top:626px;font-size:9px;color:#222;font-weight:bold;">Most recent</div>
<div class="t" style="left:261px;top:646px;font-size:8.3px;color:#9a9a9a;font-weight:normal;">Backlink page</div>
<div class="t" style="left:497.7px;top:646px;font-size:8.3px;color:#9a9a9a;font-weight:normal;">Domain InLink Rank</div>
<div class="t" style="left:593.8px;top:646px;font-size:8.3px;color:#9a9a9a;font-weight:normal;">Lost Date</div>
<div style="position:absolute;left:261px;top:662px;width:392px;height:1px;background:#eee5de"></div>
<div style="position:absolute;left:261px;top:704px;width:227px;height:1px;background:#eee5de"></div>
<div style="position:absolute;left:488px;top:705px;width:165px;height:1px;background:#eee5de"></div>
<div style="position:absolute;left:261px;top:746px;width:227px;height:1px;background:#eee5de"></div>
<div style="position:absolute;left:488px;top:747px;width:165px;height:1px;background:#eee5de"></div>
<svg style="position:absolute;left:261px;top:673.5px" width="6" height="8" viewBox="0 0 6 8"><path d="M1.3 3.5 V2.3 A1.7 1.7 0 0 1 4.7 2.3 V3.5" fill="none" stroke="#6f8fce" stroke-width="1"/><rect x="0.3" y="3.5" width="5.4" height="4.2" fill="#6f8fce"/></svg>
<div class="t" style="left:270.3px;top:674px;font-size:9px;color:#4a6fc0;font-weight:normal;">venngage.com/blog/social-media-plans/</div>
<div class="t" style="left:261px;top:684px;font-size:8.3px;color:#8a8a8a;font-weight:normal;">5 Steps To Build A Real Following With A Social Medi...</div>
<div class="t" style="right:642.7px;top:673px;font-size:9px;color:#555;font-weight:normal;">88</div>
<div style="position:absolute;left:567.0px;top:675.0px;width:4.8px;height:5px;border-radius:50%;background:#5cb54a"></div>
<div class="t" style="left:593.4px;top:673px;font-size:8.9px;color:#555;font-weight:normal;">Feb 20, 2020</div>
<svg style="position:absolute;left:261px;top:715.5px" width="6" height="8" viewBox="0 0 6 8"><path d="M1.3 3.5 V2.3 A1.7 1.7 0 0 1 4.7 2.3 V3.5" fill="none" stroke="#6f8fce" stroke-width="1"/><rect x="0.3" y="3.5" width="5.4" height="4.2" fill="#6f8fce"/></svg>
<div class="t" style="left:270.3px;top:716px;font-size:9px;color:#4a6fc0;font-weight:normal;">growthhackers.com/posts</div>
<div class="t" style="left:261px;top:726px;font-size:8.3px;color:#8a8a8a;font-weight:normal;">GrowthHackers - Premier Growth Community - Growt...</div>
<div class="t" style="right:642.7px;top:715px;font-size:9px;color:#555;font-weight:normal;">86</div>
<div style="position:absolute;left:567.0px;top:717.0px;width:4.8px;height:5px;border-radius:50%;background:#5cb54a"></div>
<div class="t" style="left:593.4px;top:715px;font-size:8.9px;color:#555;font-weight:normal;">Mar 10, 2020</div>
<svg style="position:absolute;left:261px;top:757.5px" width="6" height="8" viewBox="0 0 6 8"><path d="M1.3 3.5 V2.3 A1.7 1.7 0 0 1 4.7 2.3 V3.5" fill="none" stroke="#6f8fce" stroke-width="1"/><rect x="0.3" y="3.5" width="5.4" height="4.2" fill="#6f8fce"/></svg>
<div class="t" style="left:270.3px;top:758px;font-size:9px;color:#4a6fc0;font-weight:normal;">www.rickrea.com/seonews</div>
<div class="t" style="left:261px;top:768px;font-size:8.3px;color:#8a8a8a;font-weight:normal;">RICK REA - SEO Marketing News</div>
<div class="t" style="right:642.7px;top:757px;font-size:9px;color:#555;font-weight:normal;">0</div>
<div style="position:absolute;left:567.0px;top:759.0px;width:4.8px;height:5px;border-radius:50%;background:#d23a2f"></div>
<div class="t" style="left:593.4px;top:757px;font-size:8.9px;color:#555;font-weight:normal;">Mar 10, 2020</div>
<div class="t" style="left:701.7px;top:624px;font-size:10.5px;color:#505050;font-weight:bold;">Lost Linking Domains</div>
<svg style="position:absolute;left:820.0px;top:624.4px" width="10" height="10" viewBox="0 0 10 10"><circle cx="5" cy="5" r="4.3" fill="none" stroke="#b0b0b0" stroke-width="0.9"/><rect x="4.5" y="4.2" width="1" height="3.3" fill="#b0b0b0"/><rect x="4.5" y="2.4" width="1" height="1" fill="#b0b0b0"/></svg>
<div class="t" style="left:921.9px;top:626px;font-size:9.0px;color:#7fb060;font-weight:bold;">Best Domain InLink Rank</div>
<div class="t" style="left:1039.6px;top:626px;font-size:9px;color:#222;font-weight:bold;">Most recent</div>
<div class="t" style="left:701.7px;top:646px;font-size:8.3px;color:#9a9a9a;font-weight:normal;">Linking Domain</div>
<div class="t" style="left:938.4px;top:646px;font-size:8.3px;color:#9a9a9a;font-weight:normal;">Domain InLink Rank</div>
<div class="t" style="left:1034.5px;top:646px;font-size:8.3px;color:#9a9a9a;font-weight:normal;">Lost Date</div>
<div style="position:absolute;left:701.7px;top:662px;width:392px;height:1px;background:#eee5de"></div>
<div style="position:absolute;left:701.7px;top:704px;width:227px;height:1px;background:#eee5de"></div>
<div style="position:absolute;left:928.7px;top:705px;width:165px;height:1px;background:#eee5de"></div>
<div style="position:absolute;left:701.7px;top:746px;width:227px;height:1px;background:#eee5de"></div>
<div style="position:absolute;left:928.7px;top:747px;width:165px;height:1px;background:#eee5de"></div>
<div class="t" style="left:701.7px;top:673px;font-size:9px;color:#4a6fc0;font-weight:normal;">brandfolder.com</div>
<div class="t" style="right:203.20000000000005px;top:673px;font-size:9px;color:#555;font-weight:normal;">0</div>
<div style="position:absolute;left:1007.1px;top:675.0px;width:4.8px;height:5px;border-radius:50%;background:#d23a2f"></div>
<div class="t" style="left:1034.1px;top:673px;font-size:8.9px;color:#555;font-weight:normal;">Mar 08, 2020</div>
<div class="t" style="left:701.7px;top:715px;font-size:9px;color:#4a6fc0;font-weight:normal;">impbrand.com</div>
<div class="t" style="right:203.20000000000005px;top:715px;font-size:9px;color:#555;font-weight:normal;">0</div>
<div style="position:absolute;left:1007.1px;top:717.0px;width:4.8px;height:5px;border-radius:50%;background:#d23a2f"></div>
<div class="t" style="left:1034.1px;top:715px;font-size:8.9px;color:#555;font-weight:normal;">Feb 16, 2020</div>
<div class="t" style="left:701.7px;top:757px;font-size:9px;color:#4a6fc0;font-weight:normal;">miamiseoexpert.net</div>
<div class="t" style="right:203.20000000000005px;top:757px;font-size:9px;color:#555;font-weight:normal;">0</div>
<div style="position:absolute;left:1007.1px;top:759.0px;width:4.8px;height:5px;border-radius:50%;background:#d23a2f"></div>
<div class="t" style="left:1034.1px;top:757px;font-size:8.9px;color:#555;font-weight:normal;">Mar 01, 2020</div>
<div style="position:absolute;left:252px;top:787.3px;width:512px;height:24.300000000000068px;border:2px solid #fcd6bb;background:#fff2ea;border-radius:13px;box-sizing:border-box"></div>
<div style="position:absolute;left:261px;top:792px;width:49.8px;height:13.7px;border:1px solid #cfc8c8;border-radius:7px;box-sizing:border-box;background:transparent"></div>
<div class="t" style="left:271.8px;top:794px;font-size:8.3px;color:#555;font-weight:normal;">View all</div>
<div style="position:absolute;left:701.7px;top:792px;width:49.8px;height:13.7px;border:1px solid #cfc8c8;border-radius:7px;box-sizing:border-box;background:transparent"></div>
<div class="t" style="left:712.5px;top:794px;font-size:8.3px;color:#555;font-weight:normal;">View all</div>
</body></html>
